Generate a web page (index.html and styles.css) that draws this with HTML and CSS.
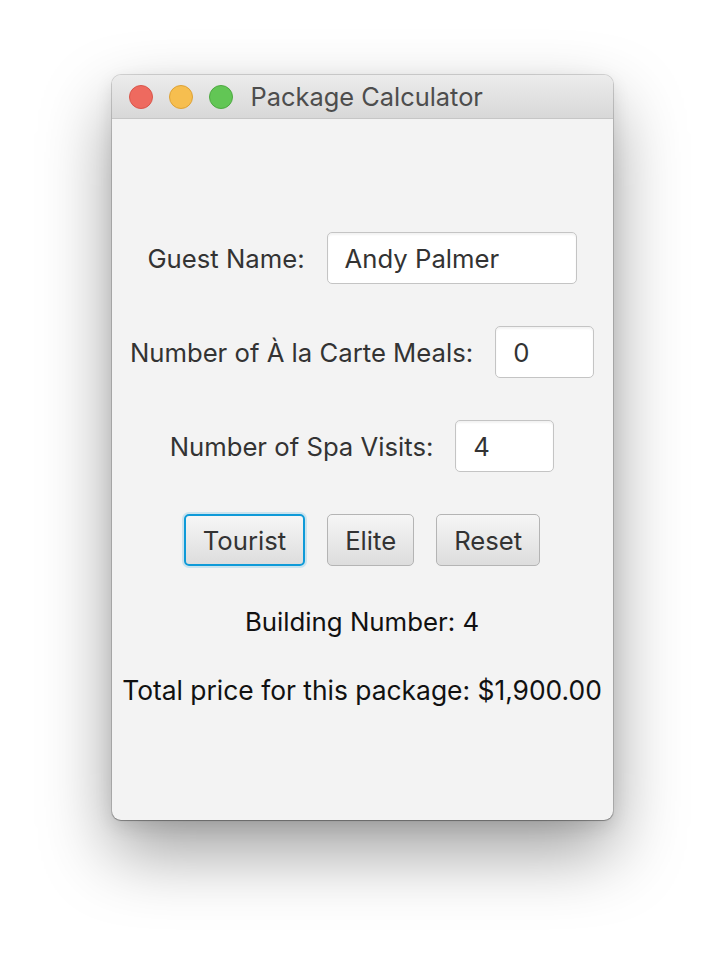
FILE: index.html
```html
<!DOCTYPE html>
<html>
<head>
<meta charset="utf-8">
<link rel="stylesheet" href="styles.css">
</head>
<body>
<div class="window">
  <div class="titlebar">
    <div class="lights">
      <span class="light red"></span>
      <span class="light yellow"></span>
      <span class="light green"></span>
    </div>
    <div class="title">Package Calculator</div>
  </div>
  <div class="content">
    <div class="row">
      <span class="label">Guest Name:</span>
      <div class="field wide">Andy Palmer</div>
    </div>
    <div class="row">
      <span class="label">Number of À la Carte Meals:</span>
      <div class="field small">0</div>
    </div>
    <div class="row">
      <span class="label">Number of Spa Visits:</span>
      <div class="field small">4</div>
    </div>
    <div class="row buttons">
      <button class="btn focused">Tourist</button>
      <button class="btn">Elite</button>
      <button class="btn">Reset</button>
    </div>
    <div class="result building">Building Number: 4</div>
    <div class="result total">Total price for this package: $1,900.00</div>
  </div>
</div>
</body>
</html>
```
FILE: styles.css
```css
html, body {
  margin: 0;
  padding: 0;
  background: #ffffff;
}
body {
  height: 968px;
  box-sizing: border-box;
  overflow: hidden;
  display: flex;
  justify-content: center;
  align-items: flex-start;
  padding-top: 75px;
  font-family: Inter, "Liberation Sans", sans-serif;
}
.window {
  width: 501px;
  height: 745px;
  border-radius: 9px;
  background: #f3f3f3;
  box-shadow: 0 0 0 1px rgba(0,0,0,0.14), 0 1px 1px rgba(0,0,0,0.25), 0 32px 70px rgba(0,0,0,0.38), 0 6px 18px rgba(0,0,0,0.10);
  overflow: hidden;
  display: flex;
  flex-direction: column;
}
.titlebar {
  height: 43px;
  border-bottom: 1px solid #c6c6c6;
  background: linear-gradient(#ececec, #d8d8d8);
  display: flex;
  align-items: center;
  padding-left: 17px;
}
.lights {
  display: flex;
  gap: 16px;
}
.light {
  width: 24px;
  height: 24px;
  border-radius: 50%;
  box-sizing: border-box;
}
.red { background: #ee6a5f; border: 1px solid #d9564b; }
.yellow { background: #f6be4f; border: 1px solid #dea236; }
.green { background: #62c655; border: 1px solid #4ea942; }
.title {
  margin-left: 18px;
  font-size: 25.4px;
  color: #4d4d4d;
}
.content {
  flex: 1;
  padding-top: 113px;
  display: flex;
  flex-direction: column;
  align-items: center;
}
.row {
  display: flex;
  align-items: center;
  gap: 22px;
  height: 52px;
  margin-bottom: 42px;
}
.label {
  font-size: 25.7px;
  color: #333333;
}
.field {
  height: 52px;
  box-sizing: border-box;
  border: 1px solid #c4c4c4;
  border-radius: 5px;
  background: #ffffff;
  box-shadow: inset 0 2px 2px rgba(0,0,0,0.05);
  display: flex;
  align-items: center;
  padding-left: 17px;
  font-size: 25.7px;
  color: #333333;
}
.field.wide { width: 250px; }
.field.small { width: 99px; }
.buttons {
  gap: 22px;
  margin-bottom: 0;
}
.btn {
  height: 52px;
  box-sizing: border-box;
  padding: 0 17px;
  border: 1px solid #b4b4b4;
  border-radius: 5px;
  background: linear-gradient(#f6f6f6, #dddddd);
  font-family: Inter, "Liberation Sans", sans-serif;
  font-size: 25.7px;
  color: #333333;
}
.btn.focused {
  border: 2px solid #0e9ad8;
  box-shadow: 0 0 0 2px rgba(14,154,216,0.18);
}
.result {
  font-size: 26.4px;
  color: #111111;
}
.building {
  margin-top: 40px;
  font-size: 25.8px;
}
.total {
  margin-top: 37px;
}
```
